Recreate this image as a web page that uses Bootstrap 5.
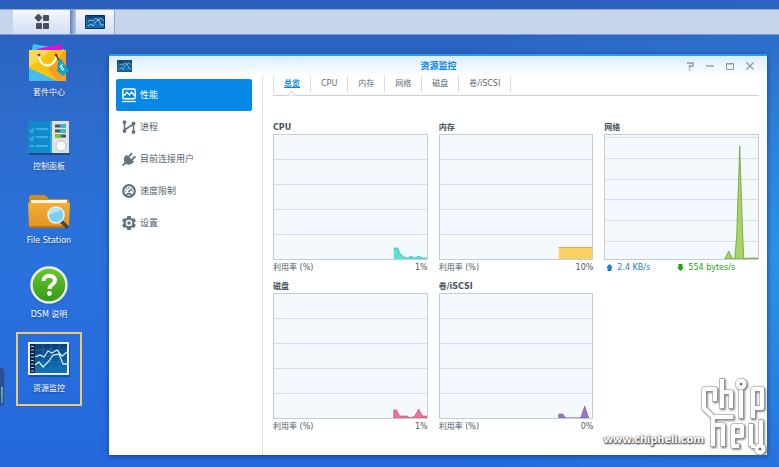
<!DOCTYPE html>
<html lang="zh-CN">
<head>
<meta charset="utf-8">
<meta name="viewport" content="width=device-width, initial-scale=1">
<title>资源监控</title>
<link rel="stylesheet" href="https://cdn.jsdelivr.net/npm/bootstrap@5.3.0/dist/css/bootstrap.min.css">
<style>
body {
  font-family: "DejaVu Sans", "Noto Sans CJK SC", sans-serif;
  font-size: 8px; line-height: 12px; color: #4f5a66;
  background: radial-gradient(ellipse 60% 60% at 100% 55%, #2b91e6, rgba(43,145,230,0) 100%),
    linear-gradient(#2b5fba, #2d6ccc 25%, #2a72dc 55%, #2468dc);
}
svg { display: block; }
.taskbar { margin-top: 9px; height: 26px; background: #c7d4ee; border-top: 1px solid #8fa9da; border-bottom: 1px solid #7d99d0; }
.task-btn { background: linear-gradient(#f4f8ff, #d3def4); border: 0; height: 24px; }
.task-menu { width: 57px; margin-left: 13px; }
.task-gap { width: 6px; background: linear-gradient(90deg, #6482bb, #b8c8e6); }
.task-app { width: 39px; border-right: 1px solid #93a9d2; }
.desk-col { width: 109px; padding: 1px 0 0 16px; }
.desk-icon { width: 66px; height: 74px; padding-top: 5px; border: 2px solid transparent;
  color: #fff; text-decoration: none; text-shadow: 0 1px 2px #123c86; white-space: nowrap; }
.desk-icon:hover { color: #fff; }
.desk-icon.active { border-color: #ecca75; }
.desk-icon svg { margin-bottom: 4px; }
.side-tab { left: 0; top: 368px; width: 5px; height: 38px; background: #2a4f94; border-right: 1px solid #3864ae; border-radius: 0 4px 4px 0; }
.side-tab::after { content: ""; position: absolute; left: 1px; top: 19px; width: 2px; height: 16px; background: linear-gradient(#8aa59b, #2f9ca2); }
.app-window { margin: 19px 12px 12px 0; min-width: 0; background: #fff; border-top: 2px solid #2b9bef; box-shadow: 0 1px 5px #123f8f; }
.work-area { min-height: 0; }
.title-bar { height: 20px; padding: 0 7px 0 8px; background: linear-gradient(#d8edfd, #fff); }
.title-text { font-size: 9px; font-weight: 700; color: #0f86e0; }
.title-side { width: 84px; }
.win-btn { width: 20px; height: 18px; border: 0; background: none; padding: 0; color: #8d99a6; }
.side-nav { width: 154px; padding: 3px 10px 0 7px; border-right: 1px solid #dde0e4; }
.side-nav .nav-link { height: 32px; padding: 0 6px; font-size: 9px; color: #56606c; border-radius: 2px; gap: 4px; }
.side-nav .nav-link.active { background: #0788e6; color: #fff; }
.main-pane { padding: 0 8px 0 10px; min-width: 0; }
.tab-row { height: 20px; border-bottom: 1px solid #cdd1d6; }
.tab-row .nav-link { height: 16px; padding: 2px 10px; color: #606b77; border-right: 1px solid #d8dde3; border-radius: 0; }
.tab-row .nav-link:first-child { border-left: 1px solid #d8dde3; }
.tab-row .nav-link.active { color: #0d86e4; font-weight: 700; text-decoration: underline; position: relative; }
.tab-row .nav-link.active::after { content: ""; position: absolute; left: 14px; top: 16px; width: 7px; height: 7px; background: #fff; border: solid #cdd1d6; border-width: 1px 0 0 1px; transform: rotate(45deg); clip-path: polygon(0 0, 100% 0, 0 100%); }
.charts { display: grid; grid-template-columns: repeat(3, 1fr); column-gap: 11px; row-gap: 7px; padding-top: 26px; }
.chart-name { font-size: 8px; line-height: 12px; font-weight: 700; color: #4a535e; margin: 0; }
.plot { width: 100%; height: 126px; background: #f4f9fe; border: 1px solid #c4ccd4; }
.plot-foot { height: 14px; padding-top: 2px; }
.up { color: #1a7fd4; } .down { color: #1da314; }
.rates { padding-left: 2px; }
.rates > span { width: 71px; white-space: nowrap; }
.rates svg { margin-top: 2px; }
.watermark { right: 11px; bottom: 12px; pointer-events: none; }
.watermark span { font: 700 11px/16px "Noto Sans", sans-serif; color: #fff; text-shadow: 0 0 2px #555, 1px 1px 2px #444, 0 1px 1px #777; margin: 0 -4px 8px 0; }
.watermark svg { filter: drop-shadow(1px 1px 1px #666); }
</style>
<script src="https://cdn.jsdelivr.net/npm/bootstrap@5.3.0/dist/js/bootstrap.bundle.min.js"></script>
</head>
<body class="vh-100 d-flex flex-column overflow-hidden position-relative">
<svg width="0" height="0" class="position-absolute" aria-hidden="true">
  <defs>
    <linearGradient id="screen" x1="0" y1="0" x2="0" y2="1"><stop offset="0" stop-color="#0a3c78"/><stop offset="1" stop-color="#1272b8"/></linearGradient>
    <linearGradient id="folder" x1="0" y1="0" x2="0" y2="1"><stop offset="0" stop-color="#f4ae39"/><stop offset="1" stop-color="#e4931f"/></linearGradient>
    <linearGradient id="green" x1="0" y1="0" x2="0" y2="1"><stop offset="0" stop-color="#6cc531"/><stop offset="1" stop-color="#339a15"/></linearGradient>
    <symbol id="monitor" viewBox="0 0 20 14" preserveAspectRatio="none">
      <path fill="url(#screen)" stroke="#0b2f5a" d="M.5.5h19v13H.5z"/>
      <path d="M3 4h16M3 7h16M3 10h16M8 1v12M13 1v12" stroke="#2a80bd" stroke-width=".4"/>
      <path d="M3 6l3-1 2 1 3-3 2 2 3-2 3 3M3 11l3-2 2 2 3-5 3-1 2 5h3" fill="none" stroke="#a6dcf8" stroke-width=".8"/>
      <path d="M1.500 2v10" stroke="#5a8fbd" stroke-dasharray="1 1"/>
    </symbol>
  </defs>
</svg>

<header class="taskbar d-flex flex-shrink-0">
  <button class="task-btn task-menu d-flex align-items-center justify-content-center" aria-label="主菜单">
    <svg width="16" height="16" viewBox="0 0 16 16" fill="#4a4e57"><path d="M4.500 0L8 3.700 4.500 7.500.8 3.700z" stroke="#4a4e57" stroke-linejoin="round"/><rect x="9" y="1" width="6" height="6" rx="1"/><rect x="2" y="9" width="6" height="6" rx="1"/><rect x="9" y="9" width="6" height="6" rx="1"/></svg>
  </button>
  <div class="task-gap"></div>
  <button class="task-btn task-app d-flex align-items-center justify-content-center p-0" aria-label="资源监控"><svg width="20" height="14"><use href="#monitor"/></svg></button>
</header>

<div class="work-area d-flex flex-fill">
  <nav class="desk-col flex-shrink-0" aria-label="桌面">
    <a href="#" class="desk-icon d-flex flex-column align-items-center">
      <svg width="42" height="40" viewBox="0 0 42 40">
        <path fill="#37c4ef" d="M5 1l31 5v5H3z"/><path fill="#d714cf" d="M9 6l24-5 2 8H8z"/>
        <path fill="#f8c414" d="M1 7h37v31H1z"/><path fill="#f69f20" d="M38 7v31h-9L20 26z"/><path fill="#43bdec" d="M1 25l28 13H1z"/><path fill="#fbd850" d="M1 7h22L1 24z"/>
        <path fill="none" stroke="#fff" stroke-width="2" d="M11 12c0 14 17 14 17 0"/><circle cx="11" cy="12" r="1.500" fill="#765016"/><circle cx="28" cy="12" r="1.500" fill="#765016"/>
        <path d="M28 12l4 7" stroke="#38220c" stroke-width="1.200"/><path fill="#13a2c9" d="M30 18l3-2 8 12-6 5-6-5z"/><path d="M33 22l3 5m-1-6l-3 2 3 5" stroke="#fff" fill="none"/>
      </svg>
      <span>套件中心</span>
    </a>
    <a href="#" class="desk-icon d-flex flex-column align-items-center">
      <svg width="42" height="40" viewBox="0 0 42 40">
        <path fill="#17324f" opacity=".6" d="M1 36h41v2H1z"/><path fill="#128ac9" d="M0 4h24v32H0z"/><path fill="#dfe3e5" d="M24 4h17v32H24z"/><path fill="#2aa4de" d="M22 4h2v32h-2z"/>
        <path d="M2 13l2 2 2-4M8 12h12M2 21l2 2 2-4M8 20h12M2 29h4M8 29h12" stroke="#45bcee" stroke-width="1.300" fill="none"/>
        <path d="M27 9h11M27 14h11M27 19h11" stroke="#475661" stroke-width="3"/><path d="M32 9h6M32 14h6" stroke="#28bde9" stroke-width="3"/><path d="M27 19h6" stroke="#70d321" stroke-width="3"/>
        <circle cx="33" cy="29" r="5" fill="#fff" stroke="#bbc3c8"/>
      </svg>
      <span>控制面板</span>
    </a>
    <a href="#" class="desk-icon d-flex flex-column align-items-center">
      <svg width="42" height="40" viewBox="0 0 42 40">
        <path fill="#d18a20" d="M1 6q0-2 2-2h14l4 4h18q2 0 2 2v26H1z"/><path fill="#fff5dc" d="M3 9h36v5H3z"/><path fill="url(#folder)" d="M0 12h42l-1 24H1z"/><path fill="#b97013" d="M1 35h40v2H1z"/>
        <path d="M33 30l7 7" stroke="#3d4a50" stroke-width="3.500"/><circle cx="28" cy="24" r="8" fill="#7acff5" stroke="#e8f3f7" stroke-width="1.500"/><path fill="#b8e7fb" d="M21 24a7 7 0 0 1 12-5z"/>
      </svg>
      <span>File Station</span>
    </a>
    <a href="#" class="desk-icon d-flex flex-column align-items-center">
      <svg width="42" height="40" viewBox="0 0 42 40">
        <circle cx="21" cy="21" r="19" fill="#254f86" opacity=".5"/><circle cx="21" cy="20" r="17.500" fill="url(#green)" stroke="#e8eee4" stroke-width="2.500"/>
        <path d="M15.500 16c0-7 11.500-7 11.500-.5 0 4-5.500 4-5.500 8.500" fill="none" stroke="#fff" stroke-width="4"/><circle cx="21.500" cy="28.500" r="2.400" fill="#fff"/>
      </svg>
      <span>DSM 说明</span>
    </a>
    <a href="#" class="desk-icon active d-flex flex-column align-items-center">
      <svg width="42" height="40" viewBox="0 0 42 40">
        <path fill="#16417f" opacity=".6" d="M1 5h41v33H1z"/><path fill="#e6edf3" d="M0 3h41v33H0z"/><path fill="url(#screen)" d="M2 5h37v29H2z"/><path fill="#082442" d="M2 5h5v29H2z"/>
        <path d="M4.500 7v26" stroke="#b7cfdf" stroke-width="3" stroke-dasharray="1 2.500"/><path d="M8 11h31M8 17h31M8 23h31M8 29h31M15 5v29M23 5v29M31 5v29" stroke="#2b82bc" stroke-width=".5"/>
        <path d="M7 18l5-2 4 2 4-6 4 2 5-3 5 6 5-4M7 26l4-3 4 5 6-6 4-6 6-1 4 10h4" fill="none" stroke="#c8ecfb" stroke-width="1.300"/>
      </svg>
      <span>资源监控</span>
    </a>
  </nav>

  <main class="app-window flex-fill d-flex flex-column">
    <div class="title-bar d-flex align-items-center justify-content-between flex-shrink-0">
      <div class="title-side"><svg width="15" height="12"><use href="#monitor"/></svg></div>
      <span class="title-text">资源监控</span>
      <div class="title-side d-flex justify-content-end">
        <button class="win-btn" aria-label="帮助"><svg class="m-auto" width="10" height="10" viewBox="0 0 10 10" fill="none" stroke="currentColor" stroke-width="1.300"><path d="M2 2h6v3H4.500v2M4.500 8v1.500"/></svg></button>
        <button class="win-btn" aria-label="最小化"><svg class="m-auto" width="10" height="10" viewBox="0 0 10 10" stroke="currentColor" stroke-width="1.300"><path d="M1 5h8"/></svg></button>
        <button class="win-btn" aria-label="最大化"><svg class="m-auto" width="10" height="10" viewBox="0 0 10 10" fill="none" stroke="currentColor"><path d="M1.500 2.500h7v6h-7zM1 3h8"/></svg></button>
        <button class="win-btn" aria-label="关闭"><svg class="m-auto" width="10" height="10" viewBox="0 0 10 10" stroke="currentColor" stroke-width="1.300"><path d="M1.500 1.500l7 7m0-7l-7 7"/></svg></button>
      </div>
    </div>

    <div class="d-flex flex-fill">
      <nav class="side-nav nav nav-pills flex-column flex-nowrap flex-shrink-0">
        <a class="nav-link active d-flex align-items-center" href="#"><svg width="14" height="15" viewBox="0 0 14 15" fill="none" stroke="#fff" stroke-width="1.500"><rect x=".8" y="1" width="12.400" height="9.700" rx="1.500"/><path d="M1 7h2l2-3 2.500 3 2-3L12 7h1" stroke-width="1.300"/><path d="M0 13.500h14" stroke-width="1.300"/></svg>性能</a>
        <a class="nav-link d-flex align-items-center" href="#"><svg width="14" height="14" viewBox="0 0 14 14" fill="none" stroke="#67727e" stroke-width="1.500"><path d="M2.500 2v10M3 9.500l8-5M11.500 4v8"/><g fill="#67727e" stroke="none"><circle cx="2.500" cy="2.200" r="1.900"/><circle cx="2.500" cy="11" r="1.900"/><circle cx="11.500" cy="3.500" r="1.900"/><circle cx="11.500" cy="12" r="1.900"/></g></svg>进程</a>
        <a class="nav-link d-flex align-items-center" href="#"><svg width="14" height="14" viewBox="0 0 14 14" fill="#67727e" stroke="#67727e"><path d="M4 4l6.500 6.200c-2 2-5 2.300-6.700.8C2 9 2.200 6 4 4z" stroke-width="1.500" stroke-linejoin="round"/><path fill="none" stroke-width="1.800" d="M6.500 5L10 1M9.500 8L13.500 4.500M4 10.500L.5 13.500"/><path stroke="none" d="M5 3l7 6.500-2 2-7-5z"/></svg>目前连接用户</a>
        <a class="nav-link d-flex align-items-center" href="#"><svg width="14" height="14" viewBox="0 0 14 14" fill="none" stroke="#67727e"><circle cx="7" cy="7" r="5.800" stroke-width="2.200"/><path d="M3 7h1.500M7 3v1.500M4.200 4.200l1 1M11 7H9.500" stroke-width="1.100"/><path d="M6.500 8l3.500-3.500" stroke-width="1.600"/><path d="M4.500 10.800Q7 8.500 9.500 10.800" stroke-width="1.800"/></svg>速度限制</a>
        <a class="nav-link d-flex align-items-center" href="#"><svg width="14" height="14" viewBox="0 0 14 14"><path fill="#67727e" fill-rule="evenodd" d="M5.300 0h3.400l.4 2 1.200.7 1.900-.7 1.700 3-1.500 1.300v1.400L13.900 9l-1.700 3-1.900-.7-1.200.7-.4 2H5.300l-.4-2-1.200-.7-1.900.7L.1 9l1.500-1.300V6.300L.1 5l1.700-3 1.900.7L4.900 2zM7 3.700a3.300 3.300 0 1 0 0 6.600 3.300 3.300 0 0 0 0-6.600z"/><circle cx="7" cy="7" r="1.800" fill="#67727e"/></svg>设置</a>
      </nav>

      <section class="main-pane flex-fill">
        <nav class="tab-row nav flex-nowrap">
          <a class="nav-link active" href="#">总览</a><a class="nav-link" href="#">CPU</a><a class="nav-link" href="#">内存</a><a class="nav-link" href="#">网络</a><a class="nav-link" href="#">磁盘</a><a class="nav-link" href="#">卷/iSCSI</a>
        </nav>
        <div class="charts">
          <div>
            <h2 class="chart-name">CPU</h2>
            <svg class="plot" viewBox="0 0 153 124" preserveAspectRatio="none"><path d="M0 24.500h153M0 49.500h153M0 74.500h153M0 99.500h153" stroke="#d9dee4"/><path fill="#5de0d7" d="M120 124v-11h4l2 5 4 4 4 1 3-2 4 2 4-2 4 2h4v1z"/><path fill="none" stroke="#35b5b3" stroke-width=".7" d="M120 113h4l2 5 4 4 4 1 3-2 4 2 4-2 4 2h4"/></svg>
            <div class="plot-foot d-flex justify-content-between"><span>利用率 (%)</span><span>1%</span></div>
          </div>
          <div>
            <h2 class="chart-name">内存</h2>
            <svg class="plot" viewBox="0 0 153 124" preserveAspectRatio="none"><path d="M0 24.500h153M0 49.500h153M0 74.500h153M0 99.500h153" stroke="#d9dee4"/><path fill="#fbd062" d="M119 112h34v12h-34z"/><path stroke="#cfae55" d="M119 112.500h34"/></svg>
            <div class="plot-foot d-flex justify-content-between"><span>利用率 (%)</span><span>10%</span></div>
          </div>
          <div>
            <h2 class="chart-name">网络</h2>
            <svg class="plot" viewBox="0 0 153 124" preserveAspectRatio="none"><path d="M0 2.500h153M0 23.500h153M0 44.500h153M0 64.500h153M0 85.500h153M0 106.500h153" stroke="#d9dee4"/><path fill="#a5d564" stroke="#6e9e3d" stroke-width=".8" d="M120 124l4-8 4 8h2l2-24 3-89 3 89 1 23.500 8-.5h6v1z"/></svg>
            <div class="plot-foot rates d-flex">
              <span class="up d-flex gap-1"><svg width="7" height="7" viewBox="0 0 7 7"><path fill="currentColor" d="M3.500 0L7 3.500H5.500V7h-4V3.500H0z"/></svg><span>2.4 KB/s</span></span>
              <span class="down d-flex gap-1"><svg width="7" height="7" viewBox="0 0 7 7"><path fill="currentColor" d="M3.500 7L7 3.500H5.500V0h-4v3.500H0z"/></svg><span>554 bytes/s</span></span>
            </div>
          </div>
          <div>
            <h2 class="chart-name">磁盘</h2>
            <svg class="plot" viewBox="0 0 153 124" preserveAspectRatio="none"><path d="M0 24.500h153M0 49.500h153M0 74.500h153M0 99.500h153" stroke="#d9dee4"/><path fill="#ee739b" stroke="#b7527a" stroke-width=".6" d="M120 124v-8h3l3 6h7l4 2 4-2 4-7 4 7h4v2z"/></svg>
            <div class="plot-foot d-flex justify-content-between"><span>利用率 (%)</span><span>1%</span></div>
          </div>
          <div>
            <h2 class="chart-name">卷/iSCSI</h2>
            <svg class="plot" viewBox="0 0 153 124" preserveAspectRatio="none"><path d="M0 24.500h153M0 49.500h153M0 74.500h153M0 99.500h153" stroke="#d9dee4"/><path fill="#9777c4" stroke="#7456a4" stroke-width=".6" d="M119 124v-4h4l3 4h15l4-12 4 12z"/></svg>
            <div class="plot-foot d-flex justify-content-between"><span>利用率 (%)</span><span>0%</span></div>
          </div>
        </div>
      </section>
    </div>
  </main>
</div>
<div class="side-tab position-absolute"></div>
<div class="watermark position-absolute d-flex align-items-end">
  <span>www.chiphell.com</span>
  <svg width="68" height="80" viewBox="0 0 68 80" fill="none" stroke-linejoin="round">
    <g stroke="#a0a0a0" stroke-width="5">
      <path d="M15 27V14H4v19l9 9h21M22 3v31M22 17h9v17M41 15v29M53 44V14h9v19h-9"/>
      <path d="M13 42v30M13 50h10v22M40 71H33V51h9v10h-9M51 48v24M51 71h5M61 44v25"/>
      <circle cx="41" cy="9" r="3.500"/><circle cx="60" cy="74" r="3.500"/>
    </g>
    <g stroke="#fff" stroke-width="4">
      <path d="M15 26V14H4v19l9 9h20M22 4v29M22 17h9v16M41 15v28M53 43V14h9v19h-9"/>
      <path d="M13 42v29M13 50h10v21M39 71H33V51h9v10h-9M51 49v22M51 71h4M61 45v24"/>
      <circle cx="41" cy="9" r="3.500" fill="#777"/><circle cx="60" cy="74" r="3.500" fill="#777"/>
    </g>
  </svg>
</div>
</body>
</html>
